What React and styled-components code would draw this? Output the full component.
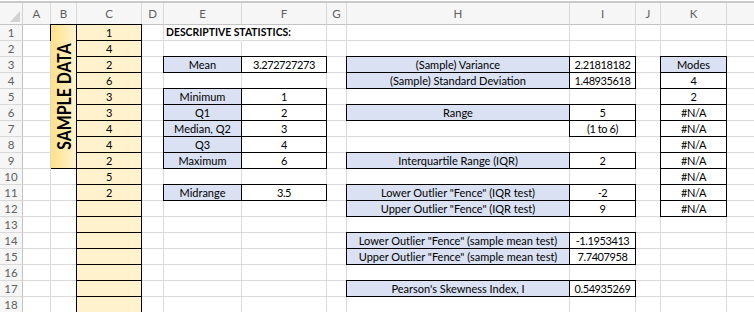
import React from 'react';
import styled, { createGlobalStyle } from 'styled-components';

const GlobalStyle = createGlobalStyle`
  html, body {
    margin: 0;
    padding: 0;
    background: #fff;
    overflow: hidden;
  }
  body {
    font-family: Lato, "Liberation Sans", sans-serif;
  }
`;

// column L sits past the right edge of the window, so its letter is not shown
const COLS = [
  { key: 'A', w: 28 },
  { key: 'B', w: 26 },
  { key: 'C', w: 65 },
  { key: 'D', w: 22 },
  { key: 'E', w: 78 },
  { key: 'F', w: 85 },
  { key: 'G', w: 20 },
  { key: 'H', w: 223 },
  { key: 'I', w: 66 },
  { key: 'J', w: 25 },
  { key: 'K', w: 66 },
  { key: 'L', w: 84, hidden: true },
];

const BLUE = '#d9e1f2';
const YELLOW = '#fff2cc';

const label = (text) => ({ text, fill: BLUE, box: true });
const value = (text) => ({ text, box: true, num: true });

// sheet content, keyed by row then column
const SHEET = {
  1: { E: { text: 'DESCRIPTIVE STATISTICS:', bold: true, align: 'left', spill: true } },
  3: {
    E: label('Mean'),
    F: value('3.272727273'),
    H: label('(Sample) Variance'),
    I: value('2.21818182'),
    K: label('Modes'),
  },
  4: {
    H: label('(Sample) Standard Deviation'),
    I: value('1.48935618'),
    K: value('4'),
  },
  5: { E: label('Minimum'), F: value('1'), K: value('2') },
  6: { E: label('Q1'), F: value('2'), H: label('Range'), I: value('5'), K: value('#N/A') },
  7: { E: label('Median, Q2'), F: value('3'), I: value('(1 to 6)'), K: value('#N/A') },
  8: { E: label('Q3'), F: value('4'), K: value('#N/A') },
  9: {
    E: label('Maximum'),
    F: value('6'),
    H: label('Interquartile Range (IQR)'),
    I: value('2'),
    K: value('#N/A'),
  },
  10: { K: value('#N/A') },
  11: {
    E: label('Midrange'),
    F: value('3.5'),
    H: label('Lower Outlier "Fence" (IQR test)'),
    I: value('-2'),
    K: value('#N/A'),
  },
  12: {
    H: label('Upper Outlier "Fence" (IQR test)'),
    I: value('9'),
    K: value('#N/A'),
  },
  14: {
    H: label('Lower Outlier "Fence" (sample mean test)'),
    I: value('-1.1953413'),
  },
  15: {
    H: label('Upper Outlier "Fence" (sample mean test)'),
    I: value('7.7407958'),
  },
  17: {
    H: label("Pearson's Skewness Index, I"),
    I: value('0.54935269'),
  },
};

const SAMPLE = ['1', '4', '2', '6', '3', '3', '4', '4', '2', '5', '2'];

const Window = styled.div`
  width: 754px;
  height: 312px;
  overflow: hidden;
  padding-top: 1px;
  box-sizing: border-box;
`;

const Grid = styled.div`
  display: grid;
  grid-template-columns: 23px ${COLS.map((c) => `${c.w}px`).join(' ')};
  grid-template-rows: 22px repeat(18, 16px);
  border-top: 2px solid #c8c8c8;
  width: max-content;
`;

const Corner = styled.div`
  background: #f6f6f6;
  border-right: 1px solid #d4d4d4;
  border-bottom: 1px solid #c4c4c4;
  display: flex;
  align-items: flex-end;
  justify-content: flex-end;
  padding: 0 2px 2px 0;
  box-sizing: border-box;
`;

const ColHead = styled.div`
  background: #f6f6f6;
  border-right: 1px solid #d9d9d9;
  border-bottom: 1px solid #c4c4c4;
  color: #5f5f5f;
  font-size: 11.5px;
  display: flex;
  align-items: center;
  justify-content: center;
  box-sizing: border-box;
`;

const RowHead = styled.div`
  background: #f6f6f6;
  border-right: 1px solid #c4c4c4;
  border-bottom: 1px solid #d9d9d9;
  color: #5f5f5f;
  font-size: 11.5px;
  display: flex;
  align-items: center;
  justify-content: center;
  box-sizing: border-box;
`;

const Cell = styled.div`
  grid-row: ${(p) => (p.$span ? `span ${p.$span}` : 'auto')};
  display: flex;
  align-items: center;
  justify-content: ${(p) => (p.$align === 'left' ? 'flex-start' : 'center')};
  padding: 0 2px;
  box-sizing: border-box;
  background: ${(p) => p.$fill || 'transparent'};
  border-right: 1px solid
    ${(p) => (p.$box ? '#000' : p.$spill ? 'transparent' : '#dadada')};
  border-bottom: 1px solid ${(p) => (p.$box ? '#000' : '#dadada')};
  box-shadow: ${(p) =>
    p.$box ? '-1px 0 0 #000, 0 -1px 0 #000, -1px -1px 0 #000' : 'none'};
  font-size: ${(p) => (p.$bold ? '10.4px' : '11px')};
  font-weight: ${(p) => (p.$bold ? 700 : 400)};
  letter-spacing: ${(p) => (p.$num ? '-0.4px' : 'normal')};
  color: #000;
  white-space: nowrap;
  overflow: ${(p) => (p.$spill ? 'visible' : 'hidden')};
  line-height: 15px;
`;

const Banner = styled(Cell)`
  background: linear-gradient(90deg, #ffe08a 0%, #ffecb3 60%, #fff3cf 100%);
  padding: 0;
`;

const BannerText = styled.span`
  writing-mode: vertical-rl;
  transform: rotate(180deg) scaleY(0.88);
  font-size: 18px;
  font-weight: 700;
  line-height: 1;
  letter-spacing: 0;
`;

const CornerMark = () => (
  <svg width="10" height="11" viewBox="0 0 10 11">
    <polygon points="10,0 10,11 0,11" fill="#d2d2d2" />
  </svg>
);

const renderRow = (r) => {
  const cells = [<RowHead key={`h${r}`}>{r}</RowHead>];
  COLS.forEach(({ key }) => {
    const id = `${key}${r}`;
    if (key === 'B') {
      if (r === 1) {
        cells.push(
          <Banner key={id} $span={9} $box>
            <BannerText>SAMPLE DATA</BannerText>
          </Banner>
        );
      } else if (r > 9) {
        cells.push(<Cell key={id} />);
      }
      return;
    }
    if (key === 'C') {
      cells.push(
        <Cell key={id} $fill={YELLOW} $box $num>
          {SAMPLE[r - 1] || ''}
        </Cell>
      );
      return;
    }
    const data = SHEET[r] && SHEET[r][key];
    if (!data) {
      cells.push(<Cell key={id} />);
      return;
    }
    cells.push(
      <Cell
        key={id}
        $fill={data.fill}
        $box={data.box}
        $bold={data.bold}
        $align={data.align}
        $spill={data.spill}
        $num={data.num}
      >
        {data.text}
      </Cell>
    );
  });
  return cells;
};

export default function App() {
  const rows = Array.from({ length: 18 }, (_, i) => i + 1);
  return (
    <>
      <GlobalStyle />
      <Window>
        <Grid>
          <Corner>
            <CornerMark />
          </Corner>
          {COLS.map((c) => (
            <ColHead key={c.key}>{c.hidden ? '' : c.key}</ColHead>
          ))}
          {rows.map(renderRow)}
        </Grid>
      </Window>
    </>
  );
}
